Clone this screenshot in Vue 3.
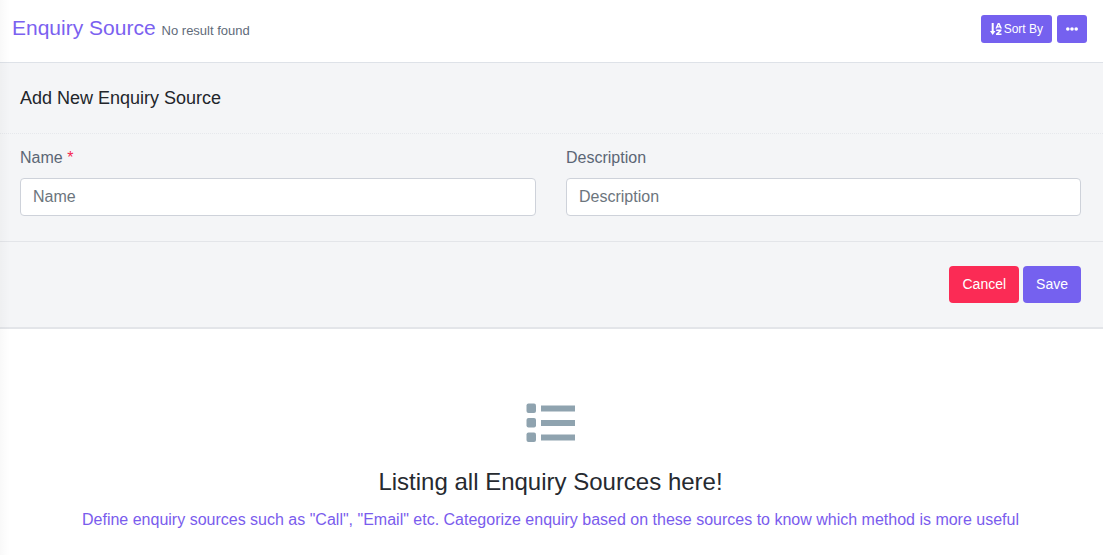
<template>
  <div class="page">
    <header class="topbar">
      <div class="heading">
        <h1>Enquiry Source</h1>
        <span class="count">No result found</span>
      </div>
      <div class="actions">
        <button class="btn small">
          <svg class="sort" viewBox="0 0 12 12" width="12" height="12" aria-hidden="true">
            <path d="M1.7 0h2v8h1.7L2.7 12 0 8h1.7z" fill="#fff" />
            <path d="M7.8 0h1.7L12 5.4h-1.7l-.4-.9H7.4l-.4.9H5.4zM7.9 3.3h1.5L8.65 1.6z" fill="#fff" />
            <path d="M6.2 6.6h5.2v1.3L8.4 10.6h3.1V12H6v-1.3l3-2.7H6.2z" fill="#fff" />
          </svg>
          <span>Sort By</span>
        </button>
        <button class="btn small dots" aria-label="More">
          <svg viewBox="0 0 12 4" width="12" height="4" aria-hidden="true">
            <circle cx="1.8" cy="2" r="1.8" fill="#fff" />
            <circle cx="6" cy="2" r="1.8" fill="#fff" />
            <circle cx="10.2" cy="2" r="1.8" fill="#fff" />
          </svg>
        </button>
      </div>
    </header>

    <section class="panel">
      <div class="panel-title">Add New Enquiry Source</div>
      <div class="fields">
        <label class="field">
          <span class="label">Name <em>*</em></span>
          <input type="text" placeholder="Name" />
        </label>
        <label class="field">
          <span class="label">Description</span>
          <input type="text" placeholder="Description" />
        </label>
      </div>
      <div class="footer">
        <button class="btn large cancel">Cancel</button>
        <button class="btn large">Save</button>
      </div>
    </section>

    <section class="empty">
      <svg class="list-icon" viewBox="0 0 50 39" width="50" height="39" aria-hidden="true">
        <rect x="0.5" y="0.5" width="9.5" height="9.5" rx="2" />
        <rect x="0.5" y="15" width="9.5" height="9.5" rx="2" />
        <rect x="0.5" y="29.5" width="9.5" height="9.5" rx="2" />
        <rect x="15" y="2.5" width="34" height="6" />
        <rect x="15" y="17" width="34" height="6" />
        <rect x="15" y="31.5" width="34" height="6" />
      </svg>
      <h2>Listing all Enquiry Sources here!</h2>
      <p>Define enquiry sources such as "Call", "Email" etc. Categorize enquiry based on these sources to know which method is more useful</p>
    </section>
  </div>
</template>

<script setup>
</script>

<style>
html, body {
  margin: 0;
  background: #fff;
}
</style>

<style scoped>
.page {
  position: relative;
  width: 1103px;
  height: 555px;
  overflow: hidden;
  font-family: "Liberation Sans", Arial, sans-serif;
  background: #fff;
}
.page::before {
  content: "";
  position: absolute;
  left: 0;
  top: 0;
  bottom: 0;
  width: 10px;
  background: linear-gradient(to right, rgba(0, 0, 0, 0.025), rgba(0, 0, 0, 0));
  pointer-events: none;
}
.topbar {
  box-sizing: border-box;
  height: 62px;
  padding: 0 16px 0 12px;
  display: flex;
  align-items: center;
  justify-content: space-between;
  background: #fff;
}
.heading {
  display: flex;
  align-items: baseline;
  gap: 6px;
  margin-top: -6px;
}
h1 {
  margin: 0;
  font-size: 21px;
  font-weight: 400;
  line-height: 24px;
  color: #7b61f0;
}
.count {
  font-size: 13px;
  color: #5f6b7a;
}
.actions {
  display: flex;
  gap: 5px;
  margin-top: -4px;
}
.btn {
  border: 0;
  color: #fff;
  background: #7561ef;
  font-family: inherit;
  cursor: pointer;
}
.btn.small {
  height: 28px;
  padding: 0 9px;
  display: flex;
  align-items: center;
  gap: 2px;
  font-size: 12px;
  border-radius: 3px;
}
.btn.dots {
  width: 30px;
  padding: 0;
  justify-content: center;
}
.panel {
  box-sizing: border-box;
  height: 267px;
  background: #f4f5f7;
  border-top: 1px solid #dee2e8;
  border-bottom: 2px solid #e3e5e9;
}
.panel-title {
  box-sizing: border-box;
  height: 71px;
  padding: 0 20px;
  display: flex;
  align-items: center;
  font-size: 18px;
  color: #22252b;
  border-bottom: 1px dotted #e6e8ec;
}
.fields {
  box-sizing: border-box;
  height: 108px;
  padding: 14px 22px 0 20px;
  display: grid;
  grid-template-columns: 516px 515px;
  column-gap: 30px;
  border-bottom: 1px solid #e3e5e9;
}
.field {
  display: flex;
  flex-direction: column;
}
.label {
  font-size: 16px;
  line-height: 20px;
  margin-bottom: 10px;
  color: #5b6675;
}
.label em {
  font-style: normal;
  color: #f5274f;
}
input {
  box-sizing: border-box;
  height: 38px;
  width: 100%;
  padding: 0 12px;
  font-family: inherit;
  font-size: 16px;
  color: #495057;
  background: #fff;
  border: 1px solid #ced2da;
  border-radius: 4px;
  outline: none;
}
input::placeholder {
  color: #6c757d;
  opacity: 1;
}
.footer {
  padding: 24px 22px 0 0;
  display: flex;
  justify-content: flex-end;
  gap: 4px;
}
.btn.large {
  height: 37px;
  padding: 0 13px 2px;
  font-size: 14px;
  border-radius: 4px;
}
.btn.cancel {
  background: #fb2b55;
}
.empty {
  display: flex;
  flex-direction: column;
  align-items: center;
  padding-top: 74px;
  margin-left: -2px;
}
.list-icon {
  fill: #8fa3af;
}
h2 {
  margin: 25px 0 0;
  font-size: 24px;
  font-weight: 400;
  line-height: 30px;
  color: #262a30;
}
p {
  margin: 13px 0 0;
  font-size: 16px;
  line-height: 20px;
  color: #7a5ced;
}
</style>
